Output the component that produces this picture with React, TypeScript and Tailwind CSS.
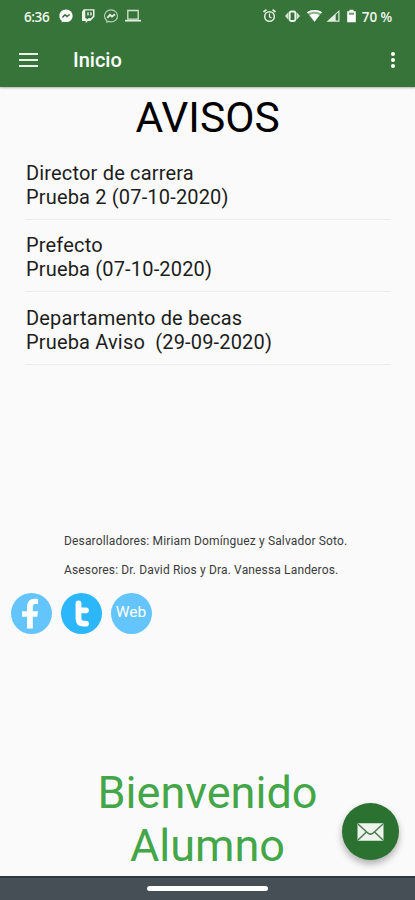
interface Notice {
  author: string;
  text: string;
}

const notices: Notice[] = [
  { author: "Director de carrera", text: "Prueba 2 (07-10-2020)" },
  { author: "Prefecto", text: "Prueba (07-10-2020)" },
  { author: "Departamento de becas", text: "Prueba Aviso  (29-09-2020)" },
];

function StatusBar() {
  return (
    <div className="flex h-[34px] items-center pl-6 pr-[23px] text-[#f1f6ef]">
      <span className="w-[35px] pt-px font-['Open_Sans',sans-serif] text-[13.5px] font-semibold tracking-[-0.4px]">
        6:36
      </span>
      <svg className="mb-0.5 h-[18px] w-[84px]" viewBox="0 0 84 18" fill="none">
        {/* Messenger */}
        <path
          d="M7 2.6c-3.7 0-6.6 2.8-6.6 6.3 0 2 .9 3.7 2.3 4.9v1.6l1.8-.7c.8.3 1.6.4 2.5.4 3.7 0 6.6-2.7 6.6-6.2S10.700 2.600 7 2.600z"
          fill="#fcfefb"
        />
        <path d="M3.300 10.600 6 7.800l2 1.700 2.700-2" stroke="#35723a" strokeWidth="1.500" />
        {/* Twitch */}
        <path
          d="M23 4.800 24.800 2.200h10.700v7.600l-4.200 4.200h-2.500l-2.100 2.200V14H23z"
          fill="#eef5ec"
        />
        <path d="M26.300 3.500h7.700v5.600l-2.200 2.100h-2.500l-1.700 1.500v-1.500h-1.300z" fill="#35723a" />
        <path d="M29 5.300v3.300M32 5.300v3.300" stroke="#e3eee0" strokeWidth="1.500" />
        {/* Messenger outline */}
        <path
          d="M52 2.800c-3.700 0-6.500 2.700-6.500 6.100 0 1.900.9 3.500 2.300 4.600v1.700l1.800-.8c.7.200 1.500.4 2.400.4 3.700 0 6.500-2.600 6.500-5.900S55.700 2.800 52 2.800z"
          stroke="#b5cfb2"
          strokeWidth="1.200"
        />
        <path d="M48.300 10.800 51 7.800l2 1.700 3-2.200" stroke="#e3eee0" strokeWidth="1.800" />
        {/* Laptop */}
        <path d="M68.800 3.500h10.400v8.700H68.800z" stroke="#d3e4d0" strokeWidth="1.300" />
        <path d="M66 13.700h16" stroke="#e3eee0" strokeWidth="1.700" />
      </svg>
      <svg className="mb-0.5 ml-auto h-[18px] w-[96px] shrink-0" viewBox="0 0 96 18" fill="none">
        {/* Alarm */}
        <circle cx="8.500" cy="9.500" r="4.800" stroke="#e3eee0" strokeWidth="1.500" />
        <path d="M8.500 6.500v3.300l2 1.300" stroke="#e3eee0" strokeWidth="1.200" />
        <path d="m2.500 5 3-2.400M14.500 5l-3-2.400" stroke="#e3eee0" strokeWidth="1.700" />
        {/* Vibrate */}
        <rect x="28.700" y="4.500" width="5.600" height="9.500" rx="1.500" stroke="#eef5ec" strokeWidth="1.800" />
        <path d="M27.500 5v8L24 9zM35.500 5v8L39 9z" fill="#d3e4d0" />
        {/* Wifi */}
        <path d="M46 5.300c4.300-3.200 10.700-3.200 15 0L53.500 14.700z" fill="#8bb08a" />
        <path d="M46 5.300c4.300-3.200 10.700-3.200 15 0l-1 1.200c-4-2.500-9-2.500-13 0z" fill="#fff" />
        <path d="M48.500 8.200c3-1.800 7-1.800 10 0l-5 6.500z" fill="#fff" />
        {/* Signal */}
        <path d="M65.500 14.700 78.500 3v11.700z" fill="#e3eee0" />
        <path d="M74.700 7.700 77.300 5.300v8.300h-2.600z" fill="#35723a" />
        {/* Battery */}
        <path d="M86.200 4.300h2.300V2.700h4v1.600h2.300v10.900h-8.600z" fill="#fff" />
        <path d="M88 5.700h5v2h-5z" fill="#6b996c" />
      </svg>
      <span className="ml-[5px] pt-px font-['Open_Sans',sans-serif] text-[13.500px] font-semibold tracking-[-0.1px] whitespace-nowrap">
        70 %
      </span>
    </div>
  );
}

function Toolbar() {
  return (
    <div className="flex h-[53px] items-center pr-5 pb-[2px] pl-[19px] text-white">
      <button aria-label="Menu" className="flex w-[19px] flex-col gap-[4px]">
        <span className="h-[2px] bg-[#e9f2e8]" />
        <span className="h-[2px] bg-[#e9f2e8]" />
        <span className="h-[2px] bg-[#e9f2e8]" />
      </button>
      <h1 className="mt-px ml-[35px] text-[20px] font-medium">Inicio</h1>
      <button aria-label="More" className="ml-auto flex flex-col gap-[2px]">
        <span className="size-[4px] rounded-full bg-white" />
        <span className="size-[4px] rounded-full bg-white" />
        <span className="size-[4px] rounded-full bg-white" />
      </button>
    </div>
  );
}

function App() {
  return (
    <div className="flex h-[900px] w-[415px] flex-col overflow-hidden bg-[#fafafa] font-[Roboto,sans-serif] text-[#1d1d1d]">
      <header className="h-[87px] shrink-0 bg-[#37743a] shadow-[0_1px_2px_rgba(0,0,0,0.3)]">
        <StatusBar />
        <Toolbar />
      </header>

      <main className="flex flex-1 flex-col">
        <h2 className="mt-[6px] text-center text-[42.500px] leading-[50px] text-black">
          AVISOS
        </h2>

        {/* Notices */}
        <ul className="mt-[4px] ml-[26px] mr-[25px]">
          {notices.map((notice) => (
            <li
              key={notice.author}
              className="h-[72.500px] border-b border-[#ececec] pt-[13.500px] text-[20px] leading-6 tracking-[0.17px] whitespace-pre"
            >
              <p>{notice.author}</p>
              <p>{notice.text}</p>
            </li>
          ))}
        </ul>

        {/* Credits */}
        <div className="mt-[162px] ml-16 text-[12px] leading-[29px] tracking-[0.15px] whitespace-nowrap text-[#3a3a3a]">
          <p>Desarolladores: Miriam Domínguez y Salvador Soto.</p>
          <p>Asesores: Dr. David Rios y Dra. Vanessa Landeros.</p>
        </div>

        <div className="mt-[8px] ml-[10.500px] flex gap-[9px] text-white">
          <a className="flex size-[41px] items-center justify-center rounded-full bg-[#64c4fc]">
            <svg className="size-[41px]" viewBox="0 0 41 41">
              <path
                d="M16 35.500V23.700h-5v-5.400h5v-3.800c0-5.500 2.700-8.700 7.700-8.700 1.300 0 2.400.1 3.300.3v4.800h-2.300c-2.200 0-2.900 1.200-2.900 3.200v4.200h5.200l-.7 5.400h-4.500v11.800z"
                fill="#fff"
              />
            </svg>
          </a>
          <a className="flex size-[41px] items-center justify-center rounded-full bg-[#2db7fb]">
            <svg className="size-[41px]" viewBox="0 0 41 41" fill="none">
              <path
                d="M17.500 10.500v15c0 3.500 1.700 5.200 5 5.200h2.500M17.500 17.300h7.500"
                stroke="#fff"
                strokeWidth="5.800"
                strokeLinecap="round"
                strokeLinejoin="round"
              />
            </svg>
          </a>
          <a className="flex size-[41px] items-center justify-center rounded-full bg-[#64c4fc] text-[15.500px]">
            Web
          </a>
        </div>

        <p className="mt-auto mb-[4px] text-center text-[45px] leading-[53px] text-[#43a648]">
          Bienvenido
          <br />
          Alumno
        </p>
      </main>

      {/* Mail button */}
      <button
        aria-label="Mail"
        className="absolute top-[803px] left-[342px] flex size-[57px] items-center justify-center rounded-full bg-[#2b7231] shadow-[0_4px_7px_rgba(0,0,0,0.3)]"
      >
        <svg className="h-[18px] w-[27px]" viewBox="0 0 27 18" fill="none">
          <rect x="0.500" y="0.200" width="26" height="17.600" rx="1" fill="#eef5ec" />
          <path
            d="m1 1 9.500 8.800c2 1.800 4 1.800 6 0L26 1M1 17l8.700-8.300M26 17l-8.700-8.300"
            stroke="#4c7a51"
            strokeWidth="1.500"
          />
        </svg>
      </button>

      <nav className="flex h-6 shrink-0 justify-center border-t-2 border-[#2e383e] bg-[#454f55] pt-[8px]">
        <span className="h-[5px] w-[121px] rounded-full bg-white" />
      </nav>
    </div>
  );
}

export default App;
